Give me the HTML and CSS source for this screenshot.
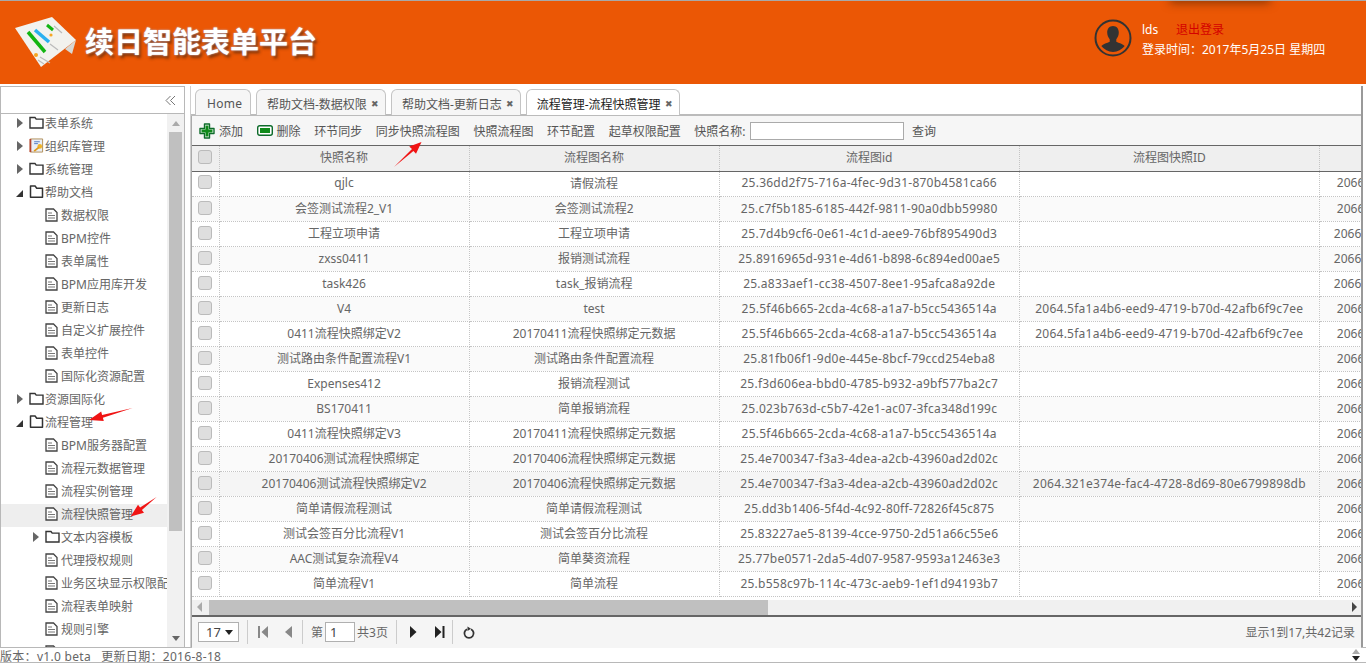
FILE: index.html
```html
<!DOCTYPE html>
<html lang="zh-CN">
<head>
<meta charset="UTF-8" />
<title>续日智能表单平台</title>
<link rel="stylesheet" href="styles.css">
</head>
<body>
<svg class="sprite" width="0" height="0">
  <symbol id="folder" viewBox="0 0 15 13">
    <path d="M1 12V1.500h5l1.200 1.600H14V12z" fill="#fff" stroke="#333" stroke-width="1.400"/>
  </symbol>
  <symbol id="folder-open" viewBox="0 0 15 13">
    <path d="M1.500 12.200V1h4.600l1.600 2.200h5.800v9z" fill="#fff" stroke="#333" stroke-width="1.500" stroke-linejoin="round"/>
  </symbol>
  <symbol id="doc" viewBox="0 0 13 14">
    <path d="M1 1h7.500L12 4.500V13H1z" fill="#fff" stroke="#444" stroke-width="1.300"/>
    <path d="M3 5h4M3 7.500h7M3 10h7" stroke="#777" stroke-width="1"/>
  </symbol>
  <symbol id="tri-first" viewBox="0 0 10 12">
    <path d="M0 0h2v12H0zM10 0v12L3.500 6z"/>
  </symbol>
  <symbol id="tri-prev" viewBox="0 0 8 12">
    <path d="M7 0v12L0 6z"/>
  </symbol>
  <symbol id="tri-next" viewBox="0 0 8 12">
    <path d="M1 0v12l6.500-6z"/>
  </symbol>
  <symbol id="tri-last" viewBox="0 0 10 12">
    <path d="M0 0v12l6.500-6zM7.500 0h2v12h-2z"/>
  </symbol>
</svg>

<div class="header">
  <svg class="logo" width="64" height="52" viewBox="0 0 64 52">
    <path d="M1 12 38 1 62 24 27 51z" fill="#f2f2ee"/>
    <path d="M51 33 62 24 58 38z" fill="#d8d8d4"/>
    <path d="M14 16 31 36" stroke="#12b512" stroke-width="3.500"/>
    <path d="M21 14 35 26" stroke="#2ab0f0" stroke-width="3.500"/>
    <path d="M33 9 39 14" stroke="#12b512" stroke-width="3"/>
    <circle cx="22" cy="39" r="2" fill="#f5a623"/>
    <circle cx="37" cy="19" r="1.600" fill="#f5a623"/>
    <path d="M26 41 36 47M24 44 30 48M40 10 48 17M36 28 44 34" stroke="#bbb" stroke-width="1.200"/>
  </svg>
  <div class="title">续日智能表单平台</div>
  <div class="top-shadow"></div>
  <div class="user">
    <svg class="avatar" width="38" height="38" viewBox="0 0 38 38">
      <circle cx="19" cy="19" r="17.500" fill="none" stroke="#333" stroke-width="2"/>
      <path d="M19 7c3.600 0 5.800 2.800 5.800 6.600 0 2.800-1.100 5.200-2.500 6.600v2.600c2.600 1.200 6.700 2.300 8.400 4.300A15.500 15.500 0 0 1 19 33a15.500 15.500 0 0 1-11.700-5.900c1.700-2 5.800-3.100 8.400-4.300v-2.600c-1.400-1.400-2.500-3.800-2.500-6.600C13.200 9.800 15.400 7 19 7z" fill="#333"/>
    </svg>
    <div class="user-info">
      <div class="user-line"><span class="user-name">lds</span><a class="logout">退出登录</a></div>
      <div class="user-line">登录时间：2017年5月25日 星期四</div>
    </div>
  </div>
</div>

<div class="main">
  <div class="west">
    <div class="west-head">
      <svg width="11" height="11" viewBox="0 0 11 11"><path d="M5.500 1 1 5.500 5.500 10M10 1 5.500 5.500 10 10" fill="none" stroke="#777" stroke-width="1"/></svg>
    </div>
    <div class="west-body">
      <div class="tree">
        <div class="node"><i class="tri"></i><svg class="ico"><use href="#folder"/></svg>表单系统</div>
        <div class="node"><i class="tri"></i>
          <svg class="ico" viewBox="0 0 15 16">
            <path d="M1 1h13v14H1z" fill="#e9eef6" stroke="#b08d55"/>
            <path d="M1 1v14" stroke="#b5462f" stroke-width="2"/>
            <path d="M5 4h6M5 6h4" stroke="#4f78c0"/>
            <circle cx="11" cy="9" r="2.500" fill="#f0b429"/>
            <path d="M10 10 5 14" stroke="#e09a1a" stroke-width="2"/>
          </svg>组织库管理</div>
        <div class="node"><i class="tri"></i><svg class="ico"><use href="#folder"/></svg>系统管理</div>
        <div class="node"><i class="tri-open"></i><svg class="ico"><use href="#folder-open"/></svg>帮助文档</div>
        <div class="node leaf"><svg class="doc"><use href="#doc"/></svg>数据权限</div>
        <div class="node leaf"><svg class="doc"><use href="#doc"/></svg>BPM控件</div>
        <div class="node leaf"><svg class="doc"><use href="#doc"/></svg>表单属性</div>
        <div class="node leaf"><svg class="doc"><use href="#doc"/></svg>BPM应用库开发</div>
        <div class="node leaf"><svg class="doc"><use href="#doc"/></svg>更新日志</div>
        <div class="node leaf"><svg class="doc"><use href="#doc"/></svg>自定义扩展控件</div>
        <div class="node leaf"><svg class="doc"><use href="#doc"/></svg>表单控件</div>
        <div class="node leaf"><svg class="doc"><use href="#doc"/></svg>国际化资源配置</div>
        <div class="node"><i class="tri"></i><svg class="ico"><use href="#folder"/></svg>资源国际化</div>
        <div class="node"><i class="tri-open"></i><svg class="ico"><use href="#folder-open"/></svg>流程管理</div>
        <div class="node leaf"><svg class="doc"><use href="#doc"/></svg>BPM服务器配置</div>
        <div class="node leaf"><svg class="doc"><use href="#doc"/></svg>流程元数据管理</div>
        <div class="node leaf"><svg class="doc"><use href="#doc"/></svg>流程实例管理</div>
        <div class="node leaf selected"><svg class="doc"><use href="#doc"/></svg>流程快照管理</div>
        <div class="node sub"><i class="tri"></i><svg class="ico"><use href="#folder"/></svg>文本内容模板</div>
        <div class="node leaf"><svg class="doc"><use href="#doc"/></svg>代理授权规则</div>
        <div class="node leaf"><svg class="doc"><use href="#doc"/></svg>业务区块显示权限配</div>
        <div class="node leaf"><svg class="doc"><use href="#doc"/></svg>流程表单映射</div>
        <div class="node leaf"><svg class="doc"><use href="#doc"/></svg>规则引擎</div>
        <div class="node leaf"><svg class="doc"><use href="#doc"/></svg></div>
      </div>
      <div class="vscroll">
        <div class="vbtn"><i class="arrow-up"></i></div>
        <div class="vthumb"></div>
        <div class="vfill"></div>
        <div class="vbtn"><i class="arrow-down"></i></div>
      </div>
    </div>
  </div>

  <div class="center">
    <div class="tabs">
      <div class="tab home">Home</div>
      <div class="tab">帮助文档-数据权限<span class="tab-x">✖</span></div>
      <div class="tab">帮助文档-更新日志<span class="tab-x">✖</span></div>
      <div class="tab active">流程管理-流程快照管理<span class="tab-x">✖</span></div>
    </div>
    <div class="panel">
      <div class="toolbar">
        <span class="tool tool-icon">
          <svg width="16" height="16" viewBox="0 0 16 16"><path d="M5.500 1h5v4.500H15v5h-4.500V15h-5v-4.500H1v-5h4.500z" fill="#fff" stroke="#0d6b2a" stroke-width="1.400" stroke-linejoin="round"/><path d="M6.500 6.500V2.500h3v4h4v3h-4v4h-3v-4h-4v-3z" fill="#0f8a1a"/></svg>添加</span>
        <span class="tool tool-icon">
          <svg width="16" height="11" viewBox="0 0 16 11"><rect x=".7" y=".7" width="14.600" height="9.600" rx="2" fill="#fff" stroke="#0d6b2a" stroke-width="1.400"/><rect x="3" y="3" width="10" height="5" fill="#0f8a1a"/></svg>删除</span>
        <span class="tool">环节同步</span>
        <span class="tool">同步快照流程图</span>
        <span class="tool">快照流程图</span>
        <span class="tool">环节配置</span>
        <span class="tool">起草权限配置</span>
        <label class="tool search-label">快照名称:<input class="search-input" type="text"></label>
        <span class="tool">查询</span>
      </div>

      <div class="grid-head">
        <table class="grid">
          <colgroup><col class="c0"><col class="c1"><col class="c2"><col class="c3"><col class="c4"><col class="c5"></colgroup>
          <tr><td><i class="check"></i></td><td>快照名称</td><td>流程图名称</td><td>流程图id</td><td>流程图快照ID</td><td></td></tr>
        </table>
      </div>
      <div class="grid-body">
        <table class="grid">
          <colgroup><col class="c0"><col class="c1"><col class="c2"><col class="c3"><col class="c4"><col class="c5"></colgroup>
          <tr><td><i class="check"></i></td><td>qjlc</td><td>请假流程</td><td>25.36dd2f75-716a-4fec-9d31-870b4581ca66</td><td></td><td class="num">2066</td></tr>
          <tr><td><i class="check"></i></td><td>会签测试流程2_V1</td><td>会签测试流程2</td><td>25.c7f5b185-6185-442f-9811-90a0dbb59980</td><td></td><td class="num">2066</td></tr>
          <tr><td><i class="check"></i></td><td>工程立项申请</td><td>工程立项申请</td><td>25.7d4b9cf6-0e61-4c1d-aee9-76bf895490d3</td><td></td><td class="num wide">2066.</td></tr>
          <tr><td><i class="check"></i></td><td>zxss0411</td><td>报销测试流程</td><td>25.8916965d-931e-4d61-b898-6c894ed00ae5</td><td></td><td class="num wide">2066.</td></tr>
          <tr><td><i class="check"></i></td><td>task426</td><td>task_报销流程</td><td>25.a833aef1-cc38-4507-8ee1-95afca8a92de</td><td></td><td class="num wide">2066.</td></tr>
          <tr><td><i class="check"></i></td><td>V4</td><td>test</td><td>25.5f46b665-2cda-4c68-a1a7-b5cc5436514a</td><td>2064.5fa1a4b6-eed9-4719-b70d-42afb6f9c7ee</td><td class="num">2066</td></tr>
          <tr><td><i class="check"></i></td><td>0411流程快照绑定V2</td><td>20170411流程快照绑定元数据</td><td>25.5f46b665-2cda-4c68-a1a7-b5cc5436514a</td><td>2064.5fa1a4b6-eed9-4719-b70d-42afb6f9c7ee</td><td class="num">2066</td></tr>
          <tr><td><i class="check"></i></td><td>测试路由条件配置流程V1</td><td>测试路由条件配置流程</td><td>25.81fb06f1-9d0e-445e-8bcf-79ccd254eba8</td><td></td><td class="num">2066</td></tr>
          <tr><td><i class="check"></i></td><td>Expenses412</td><td>报销流程测试</td><td>25.f3d606ea-bbd0-4785-b932-a9bf577ba2c7</td><td></td><td class="num">2066</td></tr>
          <tr><td><i class="check"></i></td><td>BS170411</td><td>简单报销流程</td><td>25.023b763d-c5b7-42e1-ac07-3fca348d199c</td><td></td><td class="num">2066</td></tr>
          <tr><td><i class="check"></i></td><td>0411流程快照绑定V3</td><td>20170411流程快照绑定元数据</td><td>25.5f46b665-2cda-4c68-a1a7-b5cc5436514a</td><td></td><td class="num">2066</td></tr>
          <tr><td><i class="check"></i></td><td>20170406测试流程快照绑定</td><td>20170406流程快照绑定元数据</td><td>25.4e700347-f3a3-4dea-a2cb-43960ad2d02c</td><td></td><td class="num">2066</td></tr>
          <tr class="hover"><td><i class="check"></i></td><td>20170406测试流程快照绑定V2</td><td>20170406流程快照绑定元数据</td><td>25.4e700347-f3a3-4dea-a2cb-43960ad2d02c</td><td>2064.321e374e-fac4-4728-8d69-80e6799898db</td><td class="num">2066</td></tr>
          <tr><td><i class="check"></i></td><td>简单请假流程测试</td><td>简单请假流程测试</td><td>25.dd3b1406-5f4d-4c92-80ff-72826f45c875</td><td></td><td class="num">2066</td></tr>
          <tr><td><i class="check"></i></td><td>测试会签百分比流程V1</td><td>测试会签百分比流程</td><td>25.83227ae5-8139-4cce-9750-2d51a66c55e6</td><td></td><td class="num">2066</td></tr>
          <tr><td><i class="check"></i></td><td>AAC测试复杂流程V4</td><td>简单葵资流程</td><td>25.77be0571-2da5-4d07-9587-9593a12463e3</td><td></td><td class="num">2066</td></tr>
          <tr><td><i class="check"></i></td><td>简单流程V1</td><td>简单流程</td><td>25.b558c97b-114c-473c-aeb9-1ef1d94193b7</td><td></td><td class="num">2066</td></tr>
        </table>
      </div>

      <div class="hscroll">
        <i class="arrow-left"></i>
        <div class="hthumb"></div>
        <i class="arrow-right"></i>
      </div>

      <div class="pager">
        <div class="page-size">17<i class="arrow-down dark"></i></div>
        <span class="sep"></span>
        <svg class="pg pg-off first" width="10" height="12"><use href="#tri-first"/></svg>
        <svg class="pg pg-off prev" width="8" height="12"><use href="#tri-prev"/></svg>
        <span class="sep"></span>
        <span class="page-word">第</span><input class="page-input" type="text" value="1"><span class="page-word">共3页</span>
        <span class="sep"></span>
        <svg class="pg next" width="8" height="12"><use href="#tri-next"/></svg>
        <svg class="pg last" width="10" height="12"><use href="#tri-last"/></svg>
        <span class="sep sep-last"></span>
        <svg class="refresh" width="12" height="13" viewBox="0 0 12 13"><path d="M4 3.200a4.600 4.600 0 1 0 4 0" fill="none" stroke="#333" stroke-width="1.800"/><path d="M4.500 0.500v4.600L8 2.800z" fill="#333"/></svg>
        <span class="page-info">显示1到17,共42记录</span>
      </div>
    </div>
  </div>
</div>

<div class="footer">
  <span class="footer-text">版本：v1.0 beta&nbsp;&nbsp; 更新日期：2016-8-18</span>
  <div class="footer-spin"><i class="arrow-up"></i><i class="arrow-down dark"></i></div>
</div>

<svg class="marks" width="1366" height="663" viewBox="0 0 1366 663">
  <polygon points="394,167 412,149 409.200,146.400 421.500,142 416,153.800 413.400,151" fill="#f01414"/>
  <polygon points="132.600,408 102.100,414.900 101.200,411.500 89,420 103.800,421.100 102.900,417.700" fill="#f01414"/>
  <polygon points="156.600,497 140.100,507.600 138,504.800 130.600,516.600 144,512.800 141.900,510" fill="#f01414"/>
</svg>
</body>
</html>
```

FILE: styles.css
```css
* {
  box-sizing: border-box;
}

html, body {
  margin: 0;
  height: 663px;
  overflow: hidden;
}

body {
  position: relative;
  font-family: "Noto Sans", "Noto Sans CJK SC", sans-serif;
  font-size: 12px;
  color: #666;
  background-color: #fff;
}

.sprite {
  position: absolute;
}

.marks {
  position: absolute;
  left: 0;
  top: 0;
  pointer-events: none;
}

/* header */
.header {
  position: relative;
  display: flex;
  align-items: center;
  height: 84px;
  padding-left: 14px;
  overflow: hidden;
  border-top: 1px solid #a8a8a8;
  background-color: #eb5705;
}

.logo {
  flex: none;
  margin-top: -2px;
}

.title {
  margin-left: 7px;
  margin-top: -5px;
  font-family: "Noto Sans CJK SC", sans-serif;
  font-size: 29px;
  font-weight: 700;
  white-space: nowrap;
  color: #fff;
  text-shadow: 0 0 2px #b9cdf5, 2px 3px 3px rgba(60, 30, 10, 0.6);
}

.top-shadow {
  position: absolute;
  left: 1170px;
  top: -10px;
  width: 100px;
  height: 10px;
  box-shadow: 0 2px 10px rgba(60, 30, 0, 0.55);
}

.user {
  position: absolute;
  left: 1094px;
  top: 18px;
  display: flex;
  color: #fff;
}

.user-info {
  margin-left: 10px;
  margin-top: 1px;
}

.user-line {
  height: 20px;
  line-height: 20px;
  white-space: nowrap;
}

.user-name {
  display: inline-block;
  width: 34px;
}

.logout {
  color: #d40000;
}

/* layout */
.main {
  display: flex;
  height: 561px;
  margin-top: 2px;
  padding-right: 3px;
}

.west {
  display: flex;
  flex-direction: column;
  flex: none;
  width: 185px;
  border: 1px solid #b8b8b8;
  border-bottom: 0;
}

.west-head {
  display: flex;
  justify-content: flex-end;
  align-items: center;
  flex: none;
  height: 27px;
  padding-right: 8px;
  border-bottom: 1px solid #b8b8b8;
}

.west-body {
  display: flex;
  flex: 1;
  min-height: 0;
}

.tree {
  flex: 1;
  min-width: 0;
  overflow: hidden;
}

.node {
  display: flex;
  align-items: center;
  height: 23px;
  padding-left: 15px;
  padding-bottom: 4px;
  white-space: nowrap;
}

.node:first-child {
  margin-top: -1px;
}

.node.leaf {
  padding-left: 44px;
}

.node.sub {
  padding-left: 31px;
}

.node.selected {
  background-color: #eee;
}

.tri {
  flex: none;
  width: 0;
  height: 0;
  margin: 0 6px 0 1px;
  border-left: 6px solid #666;
  border-top: 5px solid transparent;
  border-bottom: 5px solid transparent;
}

.tri-open {
  flex: none;
  width: 0;
  height: 0;
  margin: 3px 6px 0 0;
  border-bottom: 7px solid #333;
  border-left: 7px solid transparent;
}

.ico {
  flex: none;
  width: 15px;
  height: 15px;
  margin-right: 1px;
}

.doc {
  flex: none;
  width: 13px;
  height: 14px;
  margin-right: 3px;
}

.vscroll {
  display: flex;
  flex-direction: column;
  flex: none;
  width: 17px;
  background-color: #f1f1f1;
}

.vbtn {
  display: flex;
  align-items: center;
  justify-content: center;
  flex: none;
  height: 18px;
}

.vthumb {
  flex: none;
  height: 399px;
  margin: 0 2px;
  background-color: #c0c0c0;
}

.vfill {
  flex: 1;
}

.arrow-up, .arrow-down, .arrow-left, .arrow-right {
  display: block;
  width: 0;
  height: 0;
}

.arrow-up {
  border: 4px solid transparent;
  border-top: 0;
  border-bottom: 5px solid #aaa;
}

.arrow-down {
  border: 4px solid transparent;
  border-bottom: 0;
  border-top: 5px solid #666;
}

.arrow-down.dark {
  border-top-color: #222;
}

.arrow-left {
  border: 5px solid transparent;
  border-left: 0;
  border-right: 5px solid #aaa;
}

.arrow-right {
  border: 5px solid transparent;
  border-right: 0;
  border-left: 5px solid #444;
}

/* tabs */
.center {
  display: flex;
  flex-direction: column;
  flex: 1;
  min-width: 0;
  margin-left: 5px;
  border-left: 1px solid #cfcfcf;
  border-right: 2px solid #999;
}

.tabs {
  display: flex;
  gap: 5px;
  flex: none;
  height: 30px;
  padding: 3px 0 0 4px;
  border-bottom: 2px solid #bbb;
}

.tab {
  display: flex;
  align-items: center;
  height: 26px;
  padding: 2px 6px 0 10px;
  color: #555;
  white-space: nowrap;
  background-color: #f6f6f6;
  border: 1px solid #c4c4c4;
  border-bottom: 0;
  border-radius: 6px 6px 0 0;
}

.tab.home {
  width: 56px;
  padding-left: 11px;
  padding-right: 0;
  letter-spacing: 0.3px;
}

.tab.active {
  color: #222;
  background-color: #fff;
}

.tab-x {
  margin-left: 4px;
  font-size: 9px;
  color: #666;
}

/* panel */
.panel {
  display: flex;
  flex-direction: column;
  flex: 1;
  min-height: 0;
  min-width: 0;
  border-left: 1px solid #aaa;
}

.toolbar {
  display: flex;
  align-items: center;
  gap: 13.6px;
  flex: none;
  height: 30px;
  padding-left: 7px;
  color: #555;
  background-color: #f6f6f6;
  border-bottom: 1px solid #666;
}

.tool {
  display: flex;
  align-items: center;
  white-space: nowrap;
}

.tool-icon svg {
  margin-right: 4px;
}

.search-input {
  width: 154px;
  height: 18px;
  margin-left: 5px;
  padding: 0;
  background-color: #fff;
  border: 1px solid #aaa;
}

.search-label {
  margin-right: -6px;
}

.grid {
  width: 1428px;
  border-collapse: collapse;
  table-layout: fixed;
}

.c0 { width: 27px; }
.c1, .c2 { width: 250px; }
.c3, .c4, .c5 { width: 300px; }

.grid td {
  height: 25px;
  padding: 0 0 2px;
  text-align: center;
  white-space: nowrap;
  overflow: hidden;
  border-right: 1px dotted #c4c4c4;
  border-bottom: 1px dotted #c4c4c4;
}

.grid td.num {
  padding-left: 17px;
  text-align: left;
}

.grid td.num.wide {
  padding-left: 14px;
}

.grid tr:nth-child(even) {
  background-color: #fafafa;
}

.grid tr.hover {
  background-color: #f5f5f5;
}

.grid-head {
  flex: none;
  overflow: hidden;
  background-color: #efefef;
}

.grid-head .grid td {
  border-bottom: 1px solid #666;
}

.grid-body {
  flex: none;
  height: 425px;
  overflow: hidden;
}

.grid-body td:nth-child(4), .grid-body td:nth-child(5) {
  letter-spacing: 0.24px;
}

.check {
  display: block;
  width: 14px;
  height: 14px;
  margin: -1px 0 0 6px;
  background-color: #dedede;
  border: 1px solid #bbb;
  border-radius: 3px;
}

.hscroll {
  display: flex;
  align-items: center;
  flex: none;
  height: 15px;
  margin-top: 3px;
  background-color: #f0f0f0;
}

.arrow-left {
  margin-left: 5px;
}

.hthumb {
  width: 559px;
  height: 100%;
  margin-left: 7px;
  background-color: #c0c0c0;
}

.arrow-right {
  margin-left: auto;
  margin-right: 4px;
}

.pager {
  display: flex;
  align-items: center;
  flex: none;
  height: 33px;
  padding-left: 6px;
  background-color: #f5f5f5;
  border-top: 2px solid #666;
}

.page-size {
  display: flex;
  align-items: center;
  justify-content: space-between;
  width: 41px;
  height: 20px;
  padding: 0 5px 0 7px;
  font-size: 13px;
  color: #444;
  background-color: #fff;
  border: 1px solid #b0b0b0;
}

.sep {
  width: 1px;
  height: 24px;
  margin: 0 8px;
  background-color: #ccc;
}

.sep-last {
  margin-left: 7px;
}

.pg {
  flex: none;
  fill: #222;
}

.pg-off {
  fill: #888;
}

.first {
  margin-left: 2px;
}

.prev {
  margin-left: 17px;
  margin-right: 1px;
}

.next {
  margin-left: 4px;
}

.last {
  margin-left: 18px;
}

.refresh {
  margin-left: 2px;
}

.page-word {
  white-space: nowrap;
}

.page-input {
  width: 30px;
  height: 20px;
  margin: 0 2px;
  padding: 0 4px;
  font-family: inherit;
  font-size: 13px;
  color: #444;
  background-color: #fff;
  border: 1px solid #b0b0b0;
}

.page-info {
  margin-left: auto;
  margin-right: 6px;
}

/* footer */
.footer {
  display: flex;
  align-items: center;
  justify-content: space-between;
  height: 16px;
  padding-right: 6px;
  line-height: 14px;
  letter-spacing: 0.3px;
  white-space: nowrap;
  border-top: 1px solid #b8b8b8;
  border-bottom: 1px solid #b8b8b8;
}

.footer-text {
  margin-top: 3px;
}

.footer-spin {
  display: flex;
  flex-direction: column;
  gap: 2px;
}
```
